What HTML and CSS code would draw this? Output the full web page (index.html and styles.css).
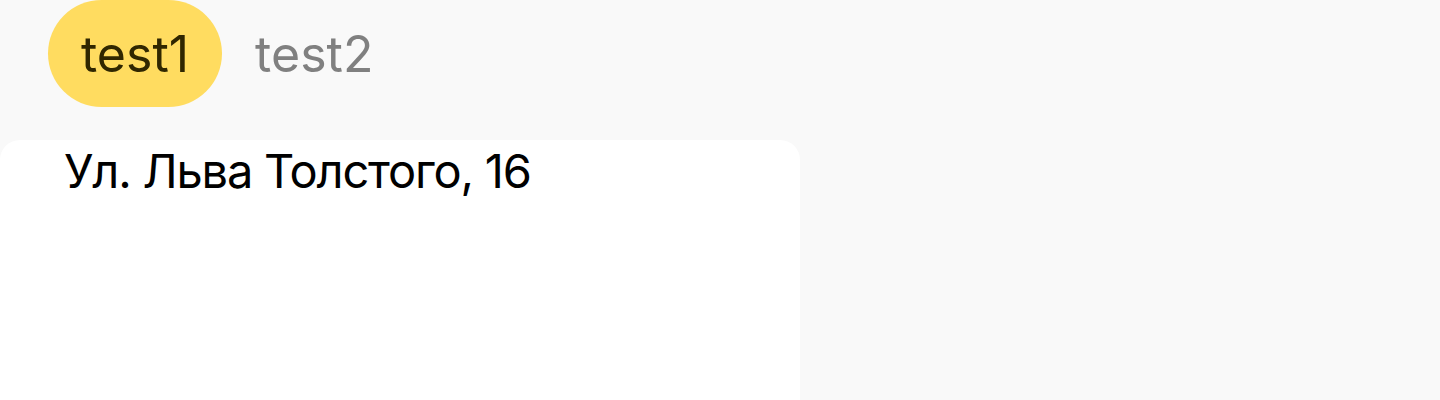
FILE: index.html
```html
<!DOCTYPE html>
<html lang="ru">
<head>
<meta charset="utf-8">
<link rel="stylesheet" href="styles.css">
</head>
<body>
<div class="page">
  <nav class="tabs">
    <div class="tab tab-active">test1</div>
    <div class="tab">test2</div>
  </nav>
  <section class="card">
    <div class="address">Ул. Льва Толстого, 16</div>
  </section>
</div>
</body>
</html>
```
FILE: styles.css
```css
html, body {
  margin: 0;
  padding: 0;
  background: #f9f9f9;
  font-family: Inter, "Noto Sans", sans-serif;
}
.page {
  display: flex;
  flex-direction: column;
  height: 400px;
  overflow: hidden;
}
.tabs {
  display: flex;
  padding-left: 48px;
}
.tab {
  height: 107px;
  padding: 0 33px;
  display: flex;
  align-items: center;
  font-size: 50px;
  letter-spacing: 0;
  color: #808080;
  border-radius: 54px;
}
.tab-active {
  background: #ffdc60;
  color: #302700;
}
.card {
  margin-top: 33px;
  width: 800px;
  flex: 1;
  background: #fff;
  border-radius: 20px 20px 0 0;
  padding: 0 64px;
  box-sizing: border-box;
}
.address {
  font-size: 47px;
  letter-spacing: -1.2px;
  line-height: 62px;
  color: #000;
}
```
